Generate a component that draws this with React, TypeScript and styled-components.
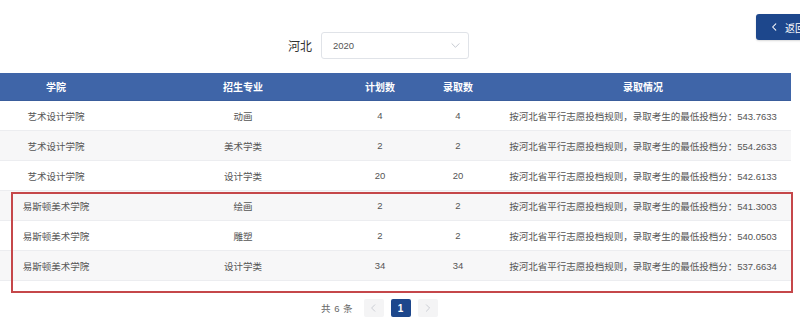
import React from "react";
import styled, { createGlobalStyle } from "styled-components";

const Global = createGlobalStyle`
  html, body { margin: 0; padding: 0; background: #ffffff; }
  body {
    font-family: "Liberation Sans", "Noto Sans CJK SC", sans-serif;
    overflow: hidden;
  }
`;

const Page = styled.div`
  width: 800px;
  height: 335px;
  overflow: hidden;
  position: relative;
`;

const TopBar = styled.div`
  display: flex;
  align-items: flex-start;
  height: 73px;
  box-sizing: border-box;
  padding-top: 14px;
  padding-left: 288px;
`;

const Filter = styled.div`
  display: flex;
  align-items: center;
  gap: 9px;
  margin-top: 18px;
`;

const Label = styled.span`
  font-size: 12px;
  color: #333;
`;

const Select = styled.div`
  width: 148px;
  height: 27px;
  box-sizing: border-box;
  border: 1px solid #e0e3e8;
  border-radius: 3px;
  display: flex;
  align-items: center;
  justify-content: space-between;
  padding: 0 8px 0 11px;
  font-size: 9.5px;
  color: #555;
`;

const BackButton = styled.button`
  margin-left: auto;
  margin-right: -16px;
  width: 60px;
  height: 26px;
  border: none;
  border-radius: 3px;
  background: #1d478c;
  color: #ffffff;
  display: flex;
  align-items: center;
  gap: 6px;
  padding: 0 0 0 15px;
  font-family: inherit;
  font-size: 10px;
  box-shadow: 0 1px 2px rgba(0, 0, 0, 0.15);
`;

const TableWrap = styled.div`
  position: relative;
  width: 791px;
`;

const Row = styled.div<{ $head?: boolean; $striped?: boolean }>`
  display: grid;
  grid-template-columns: 112px 227px 82px 74px 296px;
  height: ${(p) => (p.$head ? 28 : 30)}px;
  box-sizing: border-box;
  background: ${(p) => (p.$head ? "#3f65a8" : p.$striped ? "#f7f7f8" : "#ffffff")};
  border-bottom: 1px solid ${(p) => (p.$head ? "#3a5d9c" : "#ecedf0")};
  color: ${(p) => (p.$head ? "#ffffff" : "#555555")};
  font-size: ${(p) => (p.$head ? 10 : 9.5)}px;
  font-weight: ${(p) => (p.$head ? 700 : 400)};
`;

const Cell = styled.div<{ $offset?: number }>`
  display: flex;
  align-items: center;
  justify-content: center;
  white-space: nowrap;
  padding-left: ${(p) => p.$offset ?? 0}px;
`;

const Highlight = styled.div`
  position: absolute;
  left: 11px;
  top: 119px;
  width: 782px;
  height: 101px;
  box-sizing: border-box;
  border: 2px solid #c5474a;
  pointer-events: none;
`;

const Pager = styled.div`
  display: flex;
  align-items: center;
  margin-top: 18px;
  padding-left: 321px;
  height: 18px;
`;

const Total = styled.span`
  font-size: 9.5px;
  color: #666;
  margin-right: 11px;
  word-spacing: 1px;
`;

const PageBtn = styled.div<{ $active?: boolean }>`
  width: 20px;
  height: 18px;
  display: flex;
  align-items: center;
  justify-content: center;
  background: ${(p) => (p.$active ? "#1d478c" : "#f4f4f5")};
  color: ${(p) => (p.$active ? "#ffffff" : "#c0c4cc")};
  font-size: 10px;
  font-weight: 700;
  border-radius: 2px;
  margin-right: 7px;
`;

const Chevron = ({ dir, size = 8, color = "currentColor", sw = 1.3 }: { dir: "left" | "right" | "down"; size?: number; color?: string; sw?: number }) => {
  const d =
    dir === "left" ? "M6 1 L2 5 L6 9" : dir === "right" ? "M3 1 L7 5 L3 9" : "M1 3 L5 7 L9 3";
  return (
    <svg width={size} height={size} viewBox="0 0 10 10" fill="none">
      <path d={d} stroke={color} strokeWidth={sw} strokeLinecap="round" strokeLinejoin="round" />
    </svg>
  );
};

const rows = [
  ["艺术设计学院", "动画", "4", "4", "543.7633"],
  ["艺术设计学院", "美术学类", "2", "2", "554.2633"],
  ["艺术设计学院", "设计学类", "20", "20", "542.6133"],
  ["易斯顿美术学院", "绘画", "2", "2", "541.3003"],
  ["易斯顿美术学院", "雕塑", "2", "2", "540.0503"],
  ["易斯顿美术学院", "设计学类", "34", "34", "537.6634"],
];

export default function App() {
  return (
    <Page>
      <Global />
      <TopBar>
        <Filter>
          <Label>河北</Label>
          <Select>
            <span>2020</span>
            <Chevron dir="down" size={9} color="#c0c4cc" sw={1} />
          </Select>
        </Filter>
        <BackButton>
          <Chevron dir="left" size={8} color="#ffffff" sw={1.3} />
          <span>返回</span>
        </BackButton>
      </TopBar>
      <TableWrap>
        <Row $head>
          <Cell>学院</Cell>
          <Cell $offset={35}>招生专业</Cell>
          <Cell>计划数</Cell>
          <Cell>录取数</Cell>
          <Cell>录取情况</Cell>
        </Row>
        {rows.map((r, i) => (
          <Row key={i} $striped={i % 2 === 1}>
            <Cell>{r[0]}</Cell>
            <Cell $offset={35}>{r[1]}</Cell>
            <Cell>{r[2]}</Cell>
            <Cell>{r[3]}</Cell>
            <Cell>按河北省平行志愿投档规则，录取考生的最低投档分：{r[4]}</Cell>
          </Row>
        ))}
        <Highlight />
      </TableWrap>
      <Pager>
        <Total>共 6 条</Total>
        <PageBtn>
          <Chevron dir="left" size={8} color="#c0c4cc" sw={1} />
        </PageBtn>
        <PageBtn $active>1</PageBtn>
        <PageBtn>
          <Chevron dir="right" size={8} color="#c0c4cc" sw={1} />
        </PageBtn>
      </Pager>
    </Page>
  );
}
